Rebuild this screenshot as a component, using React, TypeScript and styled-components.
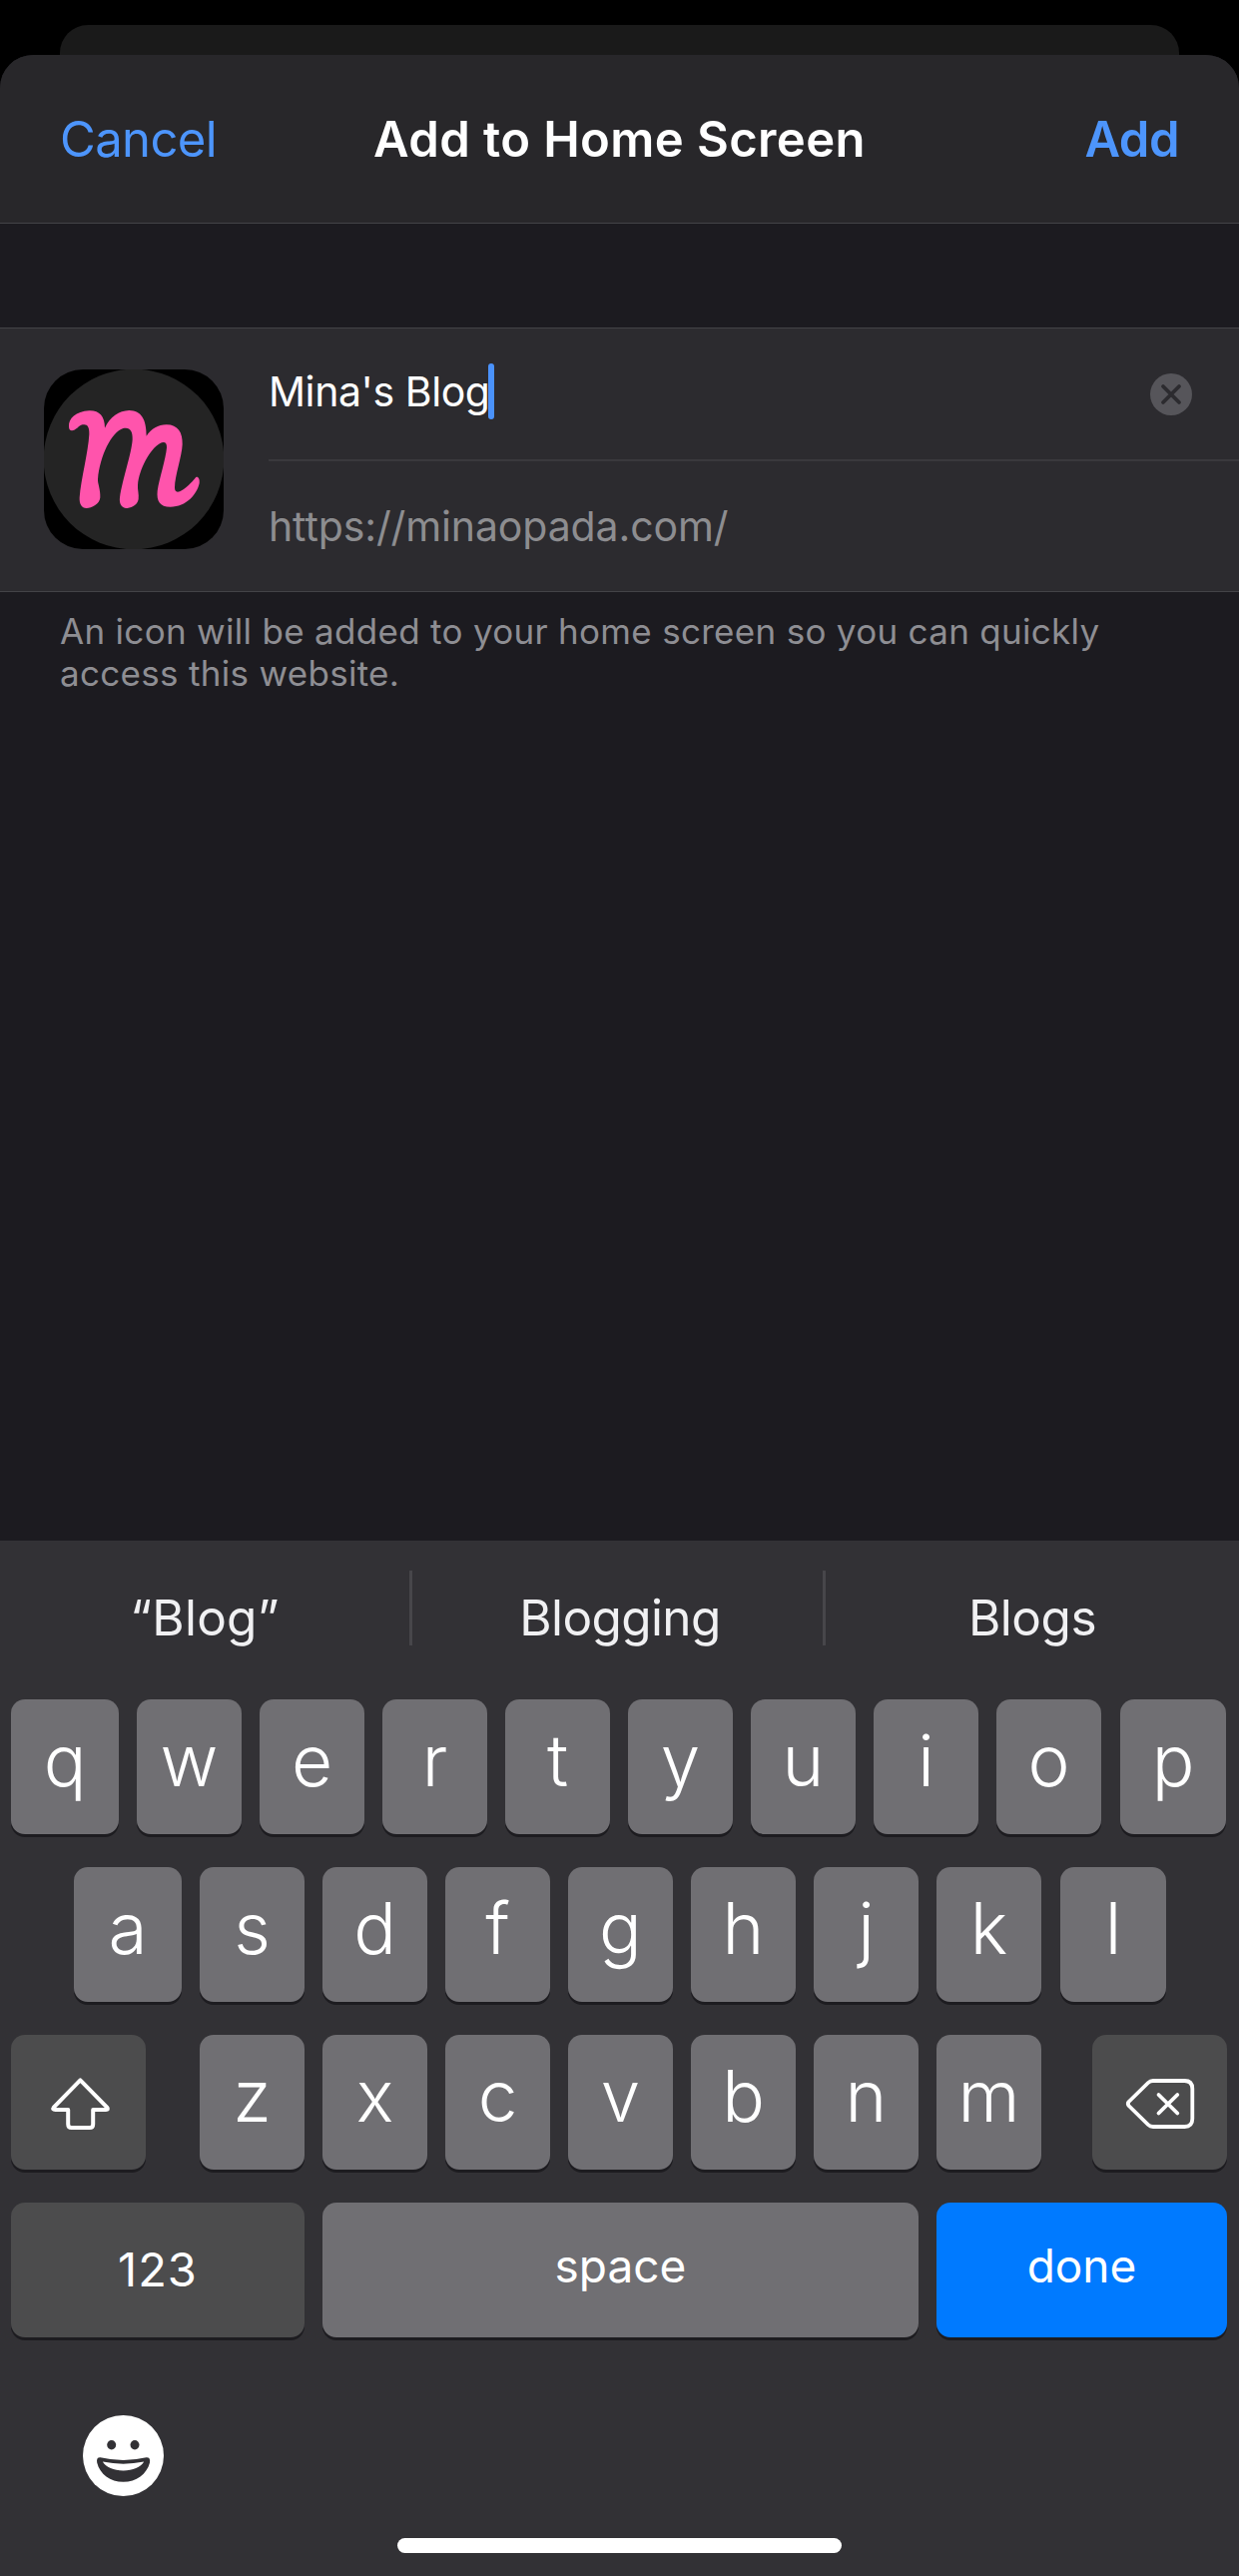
import React from "react";
import styled, { createGlobalStyle } from "styled-components";

const GlobalStyle = createGlobalStyle`
  * { box-sizing: border-box; }
  body { margin: 0; background: #000; }
  button { border: 0; margin: 0; padding: 0; background: none; color: inherit; font: inherit; }
`;

const Screen = styled.div`
  display: flex;
  flex-direction: column;
  width: 1241px;
  height: 2580px;
  padding-top: 25px;
  overflow: hidden;
  background: #000;
  color: #fff;
  font-family: Inter, "Liberation Sans", sans-serif;
`;

const SheetBehind = styled.div`
  flex: none;
  height: 30px;
  margin: 0 60px;
  border-radius: 28px 28px 0 0;
  background: #1a1a1a;
`;

const Sheet = styled.main`
  flex: 1;
  display: flex;
  flex-direction: column;
  border-radius: 33px 33px 0 0;
  overflow: hidden;
  background: #1c1b20;
`;

const NavBar = styled.header`
  display: grid;
  grid-template-columns: 1fr auto 1fr;
  align-items: center;
  height: 169px;
  padding: 2px 60px 0;
  border-bottom: 1px solid #434347;
  background: #28272a;
  font-size: 49px;
  line-height: 60px;
`;

const NavTitle = styled.h1`
  margin: 0;
  font-size: 49px;
  font-weight: 600;
  letter-spacing: 0.39px;
  white-space: nowrap;
`;

const NavButton = styled.button<{ $strong?: boolean }>`
  justify-self: ${(p) => (p.$strong ? "end" : "start")};
  color: #4d95fc;
  font-weight: ${(p) => (p.$strong ? 600 : 400)};
  letter-spacing: ${(p) => (p.$strong ? "-0.5px" : "-0.6px")};
`;

const Form = styled.section`
  display: flex;
  gap: 45px;
  margin-top: 104px;
  height: 265px;
  padding-left: 44px;
  border: solid #434347;
  border-width: 1px 0;
  background: #2c2b2f;
`;

const AppIcon = styled.svg`
  flex: none;
  width: 180px;
  height: 180px;
  margin-top: 41px;
  border-radius: 39px;
  background: #000;
`;

const Fields = styled.div`
  flex: 1;
  display: flex;
  flex-direction: column;
`;

const Field = styled.div<{ $muted?: boolean }>`
  display: flex;
  align-items: center;
  height: ${(p) => (p.$muted ? 130 : 131)}px;
  padding-bottom: ${(p) => (p.$muted ? 0 : 5)}px;
  color: ${(p) => (p.$muted ? "#8d8d90" : "#fff")};
  font-size: 41px;
  line-height: 56px;
  letter-spacing: ${(p) => (p.$muted ? "-0.12px" : "-0.42px")};
`;

const FieldDivider = styled.div`
  height: 2px;
  background: #3a393d;
`;

const Caret = styled.span`
  width: 6px;
  height: 56px;
  margin-left: -1.5px;
  border-radius: 3px;
  background: #4a92fb;
`;

const ClearButton = styled.button`
  width: 42px;
  height: 42px;
  margin: 6px 47px 0 auto;
  svg { display: block; }
`;

const Note = styled.p`
  margin: 18px 60px 0;
  color: #8e8e93;
  font-size: 35px;
  line-height: 42px;
  letter-spacing: 0.3px;
`;

const Keyboard = styled.section`
  display: flex;
  flex-direction: column;
  height: 1037px;
  margin-top: auto;
  background: #323135;
`;

const Suggestions = styled.div`
  display: flex;
  height: 159px;
  color: #f0f0f2;
  font-size: 49.5px;
  line-height: 60px;
`;

const Suggestion = styled.button<{ $width: number; $spacing: number; $shift?: number }>`
  width: ${(p) => p.$width}px;
  padding: 0 0 5px ${(p) => p.$shift ?? 0}px;
  font-weight: 380;
  letter-spacing: ${(p) => p.$spacing}px;
`;

const SuggestionDivider = styled.div`
  width: 3px;
  height: 75px;
  margin-top: 30px;
  background: #47464a;
`;

const Rows = styled.div`
  display: flex;
  flex-direction: column;
  gap: 33px;
`;

const KeyRow = styled.div<{ $left?: number }>`
  display: flex;
  gap: 18px;
  height: 135px;
  padding-left: ${(p) => p.$left ?? 11}px;
`;

type Tone = "letter" | "function" | "primary";

const toneColor: Record<Tone, string> = {
  letter: "#706f73",
  function: "#4c4c4d",
  primary: "#007aff",
};

const Key = styled.button<{ $width: number; $tone?: Tone; $before?: number }>`
  display: flex;
  align-items: center;
  justify-content: center;
  width: ${(p) => p.$width}px;
  height: 135px;
  margin-left: ${(p) => p.$before ?? 0}px;
  padding-bottom: 13px;
  border-radius: 14px;
  background: ${(p) => toneColor[p.$tone ?? "letter"]};
  box-shadow: 0 3px 0 #1d1c20;
  font-size: 71px;
  font-weight: 350;
  line-height: 90px;
`;

const WordKey = styled(Key)<{ $lift: number; $size?: number; $spacing?: number }>`
  padding-bottom: ${(p) => p.$lift}px;
  font-size: ${(p) => p.$size ?? 46}px;
  font-weight: 390;
  letter-spacing: ${(p) => p.$spacing ?? 0}px;
  line-height: 60px;
`;

const IconKey = styled(Key)`
  padding: 0;
`;

const Footer = styled.footer`
  flex: 1;
  display: flex;
  flex-direction: column;
  padding-top: 78px;
`;

const EmojiButton = styled.button`
  width: 81px;
  height: 81px;
  margin-left: 83px;
  svg { display: block; }
`;

const HomeIndicator = styled.div`
  width: 445px;
  height: 15px;
  margin: 42px auto 0;
  border-radius: 8px;
  background: #fff;
`;

const BrandMark = () => (
  <AppIcon viewBox="132 150 540 540">
    <circle cx="402" cy="420" r="271" fill="#242424" />
    <path
      fill="#ff54ac"
      d="M207 322C205 298 228 276 268 274C298 273 315 290 315 326C330 293 358 274 388 273C425 274 440 300 440 350C455 328 475 316 500 316C535 316 549 340 548 375C547 410 525 470 525 505C525 517 530 520 540 517C560 508 575 490 588 475C594 470 601 478 599 492C592 525 560 563 512 563C480 563 470 545 473 515C478 480 498 420 501 385C502 368 492 366 480 373C450 390 418 450 414 498C413 512 418 525 416 540C413 560 390 567 378 567C364 565 358 552 360 535C368 480 396 400 398 360C399 335 390 322 370 327C335 338 300 410 294 480C293 492 302 510 301 535C300 555 275 567 260 567C245 567 238 555 239 535C243 480 265 400 268 345C269 322 262 313 248 316C236 319 228 334 216 334C210 334 207 330 207 322Z"
    />
  </AppIcon>
);

const ClearIcon = () => (
  <svg width="42" height="42" viewBox="0 0 42 42">
    <circle cx="21" cy="21" r="21" fill="#56555a" />
    <path d="M13 13L29 29M29 13L13 29" stroke="#2c2b2f" strokeWidth="3.8" strokeLinecap="round" />
  </svg>
);

const ShiftIcon = () => (
  <svg width="135" height="135" viewBox="0 0 135 135" fill="none" stroke="#fff" strokeWidth="4" strokeLinejoin="round">
    <path d="M69.4 45.4L42.8 72.6Q41 75 44.5 75H57.2V89.5Q57.2 93 60.7 93H78.7Q82.2 93 82.2 89.5V75H95Q98.2 75 96.2 72.6Z" />
  </svg>
);

const DeleteIcon = () => (
  <svg width="135" height="135" viewBox="0 0 135 135" fill="none" stroke="#fff" strokeWidth="3.8" strokeLinecap="round" strokeLinejoin="round">
    <path d="M61 46H92.5Q100.3 46 100.3 54V84Q100.3 92 92.5 92H61Q58 92 56 90L36.6 71Q35 69 36.6 67L56 48Q58 46 61 46Z" />
    <path d="M66.5 60L85.3 78.5M85.3 60L66.5 78.5" />
  </svg>
);

const SmileIcon = () => (
  <svg width="81" height="81" viewBox="0 0 81 81">
    <circle cx="40.5" cy="40.5" r="40.5" fill="#fff" />
    <ellipse cx="28.7" cy="29.8" rx="4.5" ry="4.7" fill="#323135" />
    <ellipse cx="52" cy="29.8" rx="4.5" ry="4.7" fill="#323135" />
    <path d="M17.5 42.2Q40.5 47.6 63.5 42.2Q68 42 67 47.5C64 59 53.5 66.8 40.5 66.8S17 59 14.2 47.5Q13.2 42 17.5 42.2Z" fill="#323135" />
    <path d="M19.8 46.5Q40.5 50.8 61.2 46.5C58 52 50 55.4 40.5 55.4S23 52 19.8 46.5Z" fill="#fff" />
  </svg>
);

const LETTER_KEY = 105;

export default function App() {
  return (
    <>
      <GlobalStyle />
      <Screen>
        <SheetBehind />
        <Sheet>
          <NavBar>
            <NavButton>Cancel</NavButton>
            <NavTitle>Add to Home Screen</NavTitle>
            <NavButton $strong>Add</NavButton>
          </NavBar>
          <Form>
            <BrandMark />
            <Fields>
              <Field>
                <span>Mina's Blog</span>
                <Caret />
                <ClearButton aria-label="Clear text">
                  <ClearIcon />
                </ClearButton>
              </Field>
              <FieldDivider />
              <Field $muted>https://minaopada.com/</Field>
            </Fields>
          </Form>
          <Note>
            An icon will be added to your home screen so you can quickly
            <br />
            access this website.
          </Note>
          <Keyboard>
            <Suggestions>
              <Suggestion $width={410} $spacing={0.26}>“Blog”</Suggestion>
              <SuggestionDivider />
              <Suggestion $width={411} $spacing={-0.6} $shift={5}>Blogging</Suggestion>
              <SuggestionDivider />
              <Suggestion $width={414} $spacing={-0.5}>Blogs</Suggestion>
            </Suggestions>
            <Rows>
              <KeyRow>
                <Key $width={108}>q</Key>
                {[..."wertyuio"].map((c) => (
                  <Key key={c} $width={LETTER_KEY}>{c}</Key>
                ))}
                <Key $width={106} $before={1}>p</Key>
              </KeyRow>
              <KeyRow $left={74}>
                <Key $width={108}>a</Key>
                {[..."sdfghjk"].map((c) => (
                  <Key key={c} $width={LETTER_KEY}>{c}</Key>
                ))}
                <Key $width={106} $before={1}>l</Key>
              </KeyRow>
              <KeyRow>
                <IconKey $width={135} $tone="function" aria-label="Shift">
                  <ShiftIcon />
                </IconKey>
                <Key $width={LETTER_KEY} $before={36}>z</Key>
                {[..."xcvbnm"].map((c) => (
                  <Key key={c} $width={LETTER_KEY}>{c}</Key>
                ))}
                <IconKey $width={135} $tone="function" $before={33} aria-label="Delete">
                  <DeleteIcon />
                </IconKey>
              </KeyRow>
              <KeyRow>
                <WordKey $width={294} $tone="function" $lift={2} $size={47} $spacing={1}>123</WordKey>
                <WordKey $width={597} $lift={10}>space</WordKey>
                <WordKey $width={291} $tone="primary" $lift={10}>done</WordKey>
              </KeyRow>
            </Rows>
            <Footer>
              <EmojiButton aria-label="Emoji">
                <SmileIcon />
              </EmojiButton>
              <HomeIndicator />
            </Footer>
          </Keyboard>
        </Sheet>
      </Screen>
    </>
  );
}
